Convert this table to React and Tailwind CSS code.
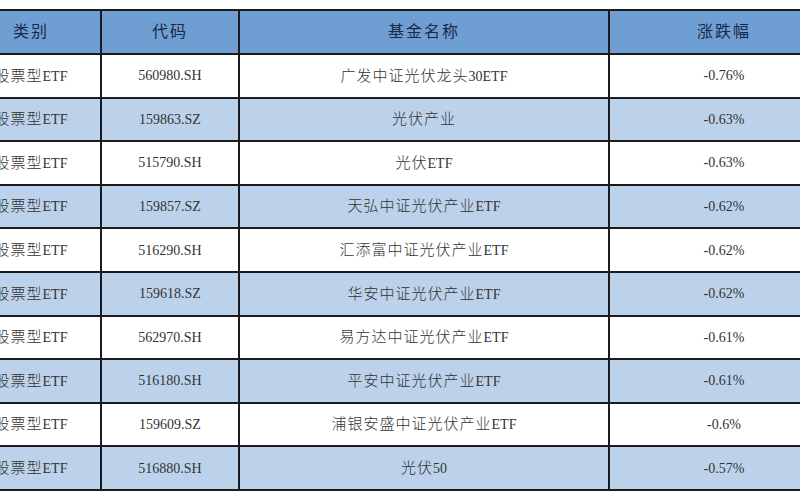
import React from 'react';

const rows = [
  ['股票型ETF', '560980.SH', '广发中证光伏龙头30ETF', '-0.76%'],
  ['股票型ETF', '159863.SZ', '光伏产业', '-0.63%'],
  ['股票型ETF', '515790.SH', '光伏ETF', '-0.63%'],
  ['股票型ETF', '159857.SZ', '天弘中证光伏产业ETF', '-0.62%'],
  ['股票型ETF', '516290.SH', '汇添富中证光伏产业ETF', '-0.62%'],
  ['股票型ETF', '159618.SZ', '华安中证光伏产业ETF', '-0.62%'],
  ['股票型ETF', '562970.SH', '易方达中证光伏产业ETF', '-0.61%'],
  ['股票型ETF', '516180.SH', '平安中证光伏产业ETF', '-0.61%'],
  ['股票型ETF', '159609.SZ', '浦银安盛中证光伏产业ETF', '-0.6%'],
  ['股票型ETF', '516880.SH', '光伏50', '-0.57%'],
];

// split text so the Chinese runs get a little extra spacing, like the Song face in the picture
const Mixed = ({ text }) => {
  const parts = text.match(/[\u4e00-\u9fff]+|[^\u4e00-\u9fff]+/g) || [];
  return parts.map((p, i) =>
    /[\u4e00-\u9fff]/.test(p) ? (
      <span key={i} className="text-[15px] tracking-[1px] font-light">{p}</span>
    ) : (
      <span key={i}>{p}</span>
    )
  );
};

const App = () => {
  return (
    <div
      className="w-[800px] h-[500px] bg-white overflow-hidden pt-[9px]"
      style={{ fontFamily: '"Liberation Serif", "Noto Sans CJK SC", serif' }}
    >
      <table className="ml-[-40px] w-[878px] table-fixed border-collapse">
        <colgroup>
          <col className="w-[140px]" />
          <col className="w-[138px]" />
          <col className="w-[370px]" />
          <col className="w-[230px]" />
        </colgroup>
        <thead>
          <tr className="h-[44px] bg-[#6e9ed2]">
            {['类别', '代码', '基金名称', '涨跌幅'].map((h) => (
              <th
                key={h}
                className="border-2 border-[#1a1a20] text-center font-normal text-[16px] tracking-[2px] text-[#1a2849] p-0"
              >
                {h}
              </th>
            ))}
          </tr>
        </thead>
        <tbody>
          {rows.map((r, i) => (
            <tr key={i} className={`h-[43.6px] ${i % 2 === 1 ? 'bg-[#bcd2ea]' : 'bg-white'}`}>
              {r.map((c, j) => (
                <td
                  key={j}
                  className="border-2 border-[#1a1a20] text-center text-[14px] text-[#333333] p-0"
                >
                  <Mixed text={c} />
                </td>
              ))}
            </tr>
          ))}
        </tbody>
      </table>
    </div>
  );
};

export default App;
